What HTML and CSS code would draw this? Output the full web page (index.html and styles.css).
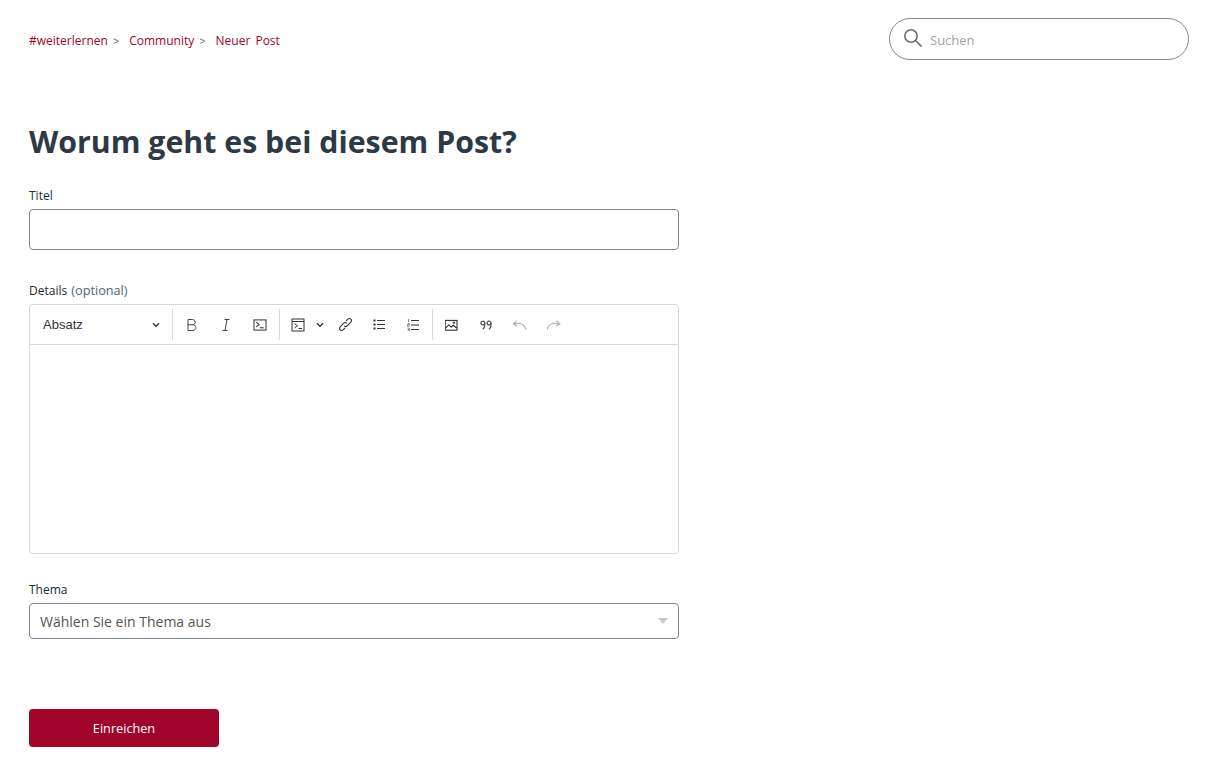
FILE: index.html
```html
<!DOCTYPE html>
<html lang="de">

<head>
    <meta charset="UTF-8">
    <meta name="viewport" content="width=device-width, initial-scale=1.0">
    <link rel="stylesheet" href="styles.css">
    <title>Neuer Post</title>
</head>

<body>
    <div class="app">
        <div class="topbar">
            <div class="crumbs">
                <a class="crumb">#weiterlernen</a><span class="sep">&gt;</span>
                <a class="crumb">Community</a><span class="sep">&gt;</span>
                <a class="crumb">Neuer Post</a>
            </div>
            <div class="search">
                <svg class="searchIcon" width="20" height="20" viewBox="0 0 20 20" fill="none" stroke="#6f6f6f" stroke-width="1.6">
                    <circle cx="8" cy="8" r="6.2" />
                    <path d="M12.5 12.5 L18.6 18.6" />
                </svg>
                <span class="searchText">Suchen</span>
            </div>
        </div>

        <form class="postForm">
            <h1>Worum geht es bei diesem Post?</h1>

            <label class="fieldLabel">Titel</label>
            <div class="textInput"></div>

            <label class="fieldLabel detailsLabel">Details <span class="optional">(optional)</span></label>
            <div class="editor">
                <div class="toolbar">
                    <div class="headingDrop">
                        <span>Absatz</span>
                        <svg width="8" height="6" viewBox="0 0 8 6" fill="none" stroke="#333" stroke-width="1.4"><path d="M1 1.2 L4 4.2 L7 1.2" /></svg>
                    </div>
                    <span class="divider"></span>
                    <div class="toolGroup">
                        <div class="tool"><svg width="12" height="14" viewBox="0 0 12 14" fill="none" stroke="#444" stroke-width="1"><path d="M2 1.5 H6.5 C10 1.5 10 6.7 6.5 6.7 H2 M6.5 6.7 C11 6.7 11 12.5 6.5 12.5 H2 V1.5" /></svg></div>
                        <div class="tool"><svg width="14" height="14" viewBox="0 0 14 14" fill="none" stroke="#444" stroke-width="1"><path d="M5.5 1.5 H10.5 M3.5 12.5 H8.5 M8 1.5 L6 12.5" /></svg></div>
                        <div class="tool"><svg width="14" height="12" viewBox="0 0 15 13" fill="none" stroke="#333" stroke-width="1.1"><rect x="1" y="1" width="13" height="11" /><path d="M3.5 3.5 L6.5 6 L3.5 8.5 M7.5 9.5 H11.5" /></svg></div>
                    </div>
                    <span class="divider"></span>
                    <div class="toolGroup">
                        <div class="tool codeDrop">
                            <svg width="14" height="14" viewBox="0 0 14 14" fill="none" stroke="#333" stroke-width="1"><rect x="1" y="1" width="12" height="12" /><path d="M1 3.5 H13 M3.5 5.5 L6.5 7.8 L3.5 10 M7.5 10.5 H11" /></svg>
                            <svg width="8" height="6" viewBox="0 0 8 6" fill="none" stroke="#333" stroke-width="1.4"><path d="M1 1.2 L4 4.2 L7 1.2" /></svg>
                        </div>
                        <div class="tool"><svg width="15" height="15" viewBox="0 0 15 15" fill="none" stroke="#333" stroke-width="1.1"><path d="M6.2 8.8 C7.2 9.8 8.4 9.6 9.2 8.8 L12.6 5.4 C14.8 3 12 0.2 9.6 2.4 L8 4 M8.8 6.2 C7.8 5.2 6.6 5.4 5.8 6.2 L2.4 9.6 C0.2 12 3 14.8 5.4 12.6 L7 11" /></svg></div>
                        <div class="tool"><svg width="12" height="11" viewBox="0 0 12 11" fill="none" stroke="#333"><path d="M4 1.5 H12 M4 5.5 H12 M4 9.5 H12" /><path d="M0.5 1.5 H2.5 M0.5 5.5 H2.5 M0.5 9.5 H2.5" stroke-width="2" /></svg></div>
                        <div class="tool"><svg width="12" height="12" viewBox="0 0 12 12" fill="none" stroke="#333"><path d="M4 1.5 H12 M4 6 H12 M4 10.5 H12" /><path d="M1.5 0 V3 M0.5 4.6 H2.3 V6 H0.5 V7.2 H2.3 M0.5 9 H2.3 V12 H0.5 M0.8 10.5 H2.3" stroke-width="0.6" /></svg></div>
                    </div>
                    <span class="divider"></span>
                    <div class="toolGroup">
                        <div class="tool"><svg width="14" height="12" viewBox="1 0 14 13" fill="none" stroke="#222" stroke-width="1.1"><rect x="0.6" y="1.5" width="12.8" height="10.6" /><path d="M1 10 L4.5 6.5 L7 8.8 L9.5 6.8 L13 9.8" /><path d="M10.2 2.6 V5.4 M8.8 4 H11.6" stroke-width="0.9" /></svg></div>
                        <div class="tool"><svg width="12" height="10" viewBox="0 0 12 10" fill="none" stroke="#555" stroke-width="1.3"><circle cx="2.8" cy="3" r="1.9" /><circle cx="9" cy="3" r="1.9" /><path d="M4.7 3 V5.5 C4.7 7.2 4 8.4 2.8 9.2 M10.9 3 V5.5 C10.9 7.2 10.2 8.4 9 9.2" /></svg></div>
                        <div class="tool"><svg width="15" height="10" viewBox="1 0 15 10" fill="none" stroke="#aaa" stroke-width="1.1"><path d="M14 9.5 C13 4.5 8 2 2 4" /><path d="M4.5 0.8 L1.2 4 L5 6" /></svg></div>
                        <div class="tool"><svg width="15" height="10" viewBox="1 0 15 10" fill="none" stroke="#aaa" stroke-width="1.1"><path d="M1 9.5 C2 4.5 7 2 13 4" /><path d="M10.5 0.8 L13.8 4 L10 6" /></svg></div>
                    </div>
                </div>
                <div class="editArea"></div>
            </div>

            <label class="fieldLabel themeLabel">Thema</label>
            <div class="selectBox">
                <span>Wählen Sie ein Thema aus</span>
                <span class="selectArrow"></span>
            </div>

            <button class="submitBtn" type="button">Einreichen</button>
        </form>
    </div>
</body>

</html>
```

FILE: styles.css
```css
* {
    box-sizing: border-box;
}

body {
    margin: 0;
    background-color: #fff;
    font-family: "Open Sans", "Noto Sans", sans-serif;
    color: #212b36;
}

.app {
    display: flex;
    flex-flow: column;
    padding: 18px 37px 0 29px;
}

.topbar {
    display: flex;
    align-items: center;
    justify-content: space-between;
    height: 42px;
}

.crumbs {
    display: flex;
    align-items: center;
    padding-top: 2px;
    font-size: 12px;
    word-spacing: 2px;
}

.crumb {
    color: #a0042a;
}

.sep {
    color: #54687a;
    margin: 0 10px 0 5px;
    font-size: 11px;
}

.search {
    display: flex;
    align-items: center;
    width: 300px;
    height: 42px;
    border: 1px solid #7c8a98;
    border-radius: 21px;
    padding-left: 13px;
}

.searchIcon {
    margin-top: -3px;
}

.searchText {
    margin-left: 7px;
    padding-top: 1px;
    font-size: 13px;
    color: #a3a3a3;
}

.postForm {
    display: flex;
    flex-flow: column;
    width: 650px;
}

h1 {
    margin: 60px 0 0;
    height: 44px;
    line-height: 44px;
    font-size: 30.3px;
    font-weight: 700;
    color: #2d3a45;
    white-space: nowrap;
}

.fieldLabel {
    display: block;
    font-size: 12px;
    height: 20px;
    line-height: 22px;
    margin-top: 21px;
    margin-bottom: 4px;
}

.detailsLabel {
    margin-top: 30px;
}

.themeLabel {
    margin-top: 25px;
}

.optional {
    margin-left: 1px;
    font-size: 12.7px;
    line-height: 1;
    color: #4f6475;
}

.textInput {
    height: 41px;
    border: 1px solid #7c8a98;
    border-radius: 4px;
}

.editor {
    height: 250px;
    border: 1px solid #d9d9d9;
    border-radius: 4px;
}

.toolbar {
    display: flex;
    align-items: center;
    height: 40px;
    border-bottom: 1px solid #d9d9d9;
}

.headingDrop {
    display: flex;
    align-items: center;
    justify-content: space-between;
    width: 142px;
    padding: 0 12px 0 13px;
    font-family: "Liberation Sans", sans-serif;
    font-size: 13px;
    color: #333;
}

.divider {
    width: 1px;
    height: 31px;
    background-color: #d9d9d9;
}

.toolGroup {
    display: flex;
    align-items: center;
    padding: 0 2px;
}

.tool {
    display: flex;
    align-items: center;
    justify-content: center;
    width: 34px;
    height: 34px;
}

.codeDrop {
    justify-content: flex-start;
    width: 46px;
    padding-left: 9px;
    gap: 11px;
}

.selectBox {
    display: flex;
    align-items: center;
    justify-content: space-between;
    height: 36px;
    border: 1px solid #7c8a98;
    border-radius: 4px;
    padding: 0 10px;
    font-size: 14px;
    color: #555;
}

.selectArrow {
    width: 0;
    height: 0;
    border-left: 5px solid transparent;
    border-right: 5px solid transparent;
    border-top: 6px solid #c8c8c8;
}

.submitBtn {
    width: 190px;
    height: 38px;
    margin-top: 70px;
    border: 0;
    border-radius: 4px;
    background-color: #a0042a;
    color: #fff;
    font-family: inherit;
    font-size: 12.7px;
}
```
